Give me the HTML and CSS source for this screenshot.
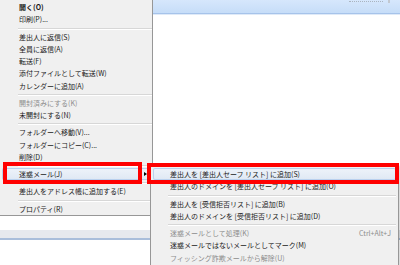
FILE: index.html
```html
<!DOCTYPE html>
<html lang="ja">
<head>
  <meta charset="UTF-8">
  <title>迷惑メール メニュー</title>
  <link rel="stylesheet" href="styles.css">
</head>
<body>
  <div class="screen">
    <div class="ribbon"><span class="ribbon-dots"></span><span class="ribbon-tab"></span></div>
    <div class="pane"></div>
    <div class="statusbar"></div>
  </div>

  <ul class="menu main-menu">
    <li class="item bold">開く(O)</li>
    <li class="item">印刷(P)...</li>
    <li class="sep"></li>
    <li class="item">差出人に返信(S)</li>
    <li class="item">全員に返信(A)</li>
    <li class="item">転送(F)</li>
    <li class="item">添付ファイルとして転送(W)</li>
    <li class="item">カレンダーに追加(A)</li>
    <li class="sep"></li>
    <li class="item off">開封済みにする(K)</li>
    <li class="item">未開封にする(N)</li>
    <li class="sep"></li>
    <li class="item">フォルダーへ移動(V)...</li>
    <li class="item">フォルダーにコピー(C)...</li>
    <li class="item">削除(D)</li>
    <li class="sep"></li>
    <li class="item hover has-sub">迷惑メール(J)<span class="arrow"></span></li>
    <li class="sep"></li>
    <li class="item">差出人をアドレス帳に追加する(E)</li>
    <li class="sep"></li>
    <li class="item">プロパティ(R)</li>
  </ul>

  <ul class="menu sub-menu">
    <li class="item hover">差出人を [差出人セーフ リスト] に追加(S)</li>
    <li class="item">差出人のドメインを [差出人セーフ リスト] に追加(O)</li>
    <li class="sep"></li>
    <li class="item">差出人を [受信拒否リスト] に追加(B)</li>
    <li class="item">差出人のドメインを [受信拒否リスト] に追加(D)</li>
    <li class="sep"></li>
    <li class="item off">迷惑メールとして処理(K)<span class="key">Ctrl+Alt+J</span></li>
    <li class="item">迷惑メールではないメールとしてマーク(M)</li>
    <li class="item off">フィッシング詐欺メールから解除(U)</li>
  </ul>

  <div class="mark mark-main"></div>
  <div class="mark mark-sub"></div>
</body>
</html>
```

FILE: styles.css
```css
body { margin: 0; background: #fff; font-family: "Noto Sans CJK JP", "Noto Sans", sans-serif; font-size: 7px; color: #1a1a1a; overflow: hidden; }
.screen { width: 400px; height: 265px; display: flex; flex-direction: column; }
.ribbon { height: 13px; flex: none; background: linear-gradient(#d6e7fc, #c6ddf8); border-bottom: 1px solid #a6c3ea; box-shadow: 0 1px 0 #dfeaf8; display: flex; justify-content: flex-end; align-items: flex-start; gap: 5px; padding-right: 10px; }
.ribbon-dots { width: 34px; height: 1px; border-bottom: 1px dotted #aab4c0; }
.ribbon-tab { width: 2px; height: 3px; background: #c2c8d0; }
.pane { height: 216px; flex: none; }
.statusbar { height: 8px; flex: none; background: #e6e9ee; border-bottom: 2px solid #a9bedb; }

.menu { list-style: none; margin: 0; position: absolute; background: #f0f0f0; }
.main-menu { left: 0; top: 0; width: 152px; padding: 1px 0 0; border-right: 1px solid #979797; border-bottom: 1px solid #979797; }
.sub-menu { left: 150px; top: 164px; width: 247px; padding: 3px 0 4px; border: 1px solid #979797; box-shadow: 2px 2px 2px rgba(0,0,0,0.15); }

.item { height: 12.25px; line-height: 12.25px; padding-left: 19px; white-space: nowrap; position: relative; display: flex; }
.sub-menu .item { padding-left: 19px; padding-right: 7px; }
.bold { font-weight: bold; }
.off { color: #8d8d8d; }
.key { margin-left: auto; }
.hover { background: linear-gradient(#eef3fa, #dfe8f4); box-shadow: inset 0 0 0 1px #b9d0ee; margin: 0 2px; padding-left: 17px; border-radius: 2px; }
.sub-menu .hover { padding-left: 17px; }

.sep { height: 5px; margin-left: 18px; background: linear-gradient(transparent 2px, #d7d7d7 2px, #d7d7d7 3px, #fff 3px, #fff 4px, transparent 4px); }
.sub-menu .sep { margin-left: 17px; margin-right: 2px; }

.arrow { position: absolute; right: 3px; top: 3.5px; width: 0; height: 0; border-left: 3px solid #000; border-top: 2.5px solid transparent; border-bottom: 2.5px solid transparent; }

.mark { position: absolute; border: 4px solid #ff0000; box-sizing: border-box; }
.mark-main { left: 3px; top: 162px; width: 139px; height: 22px; }
.mark-sub { left: 147px; top: 163px; width: 252px; height: 21px; }
```
